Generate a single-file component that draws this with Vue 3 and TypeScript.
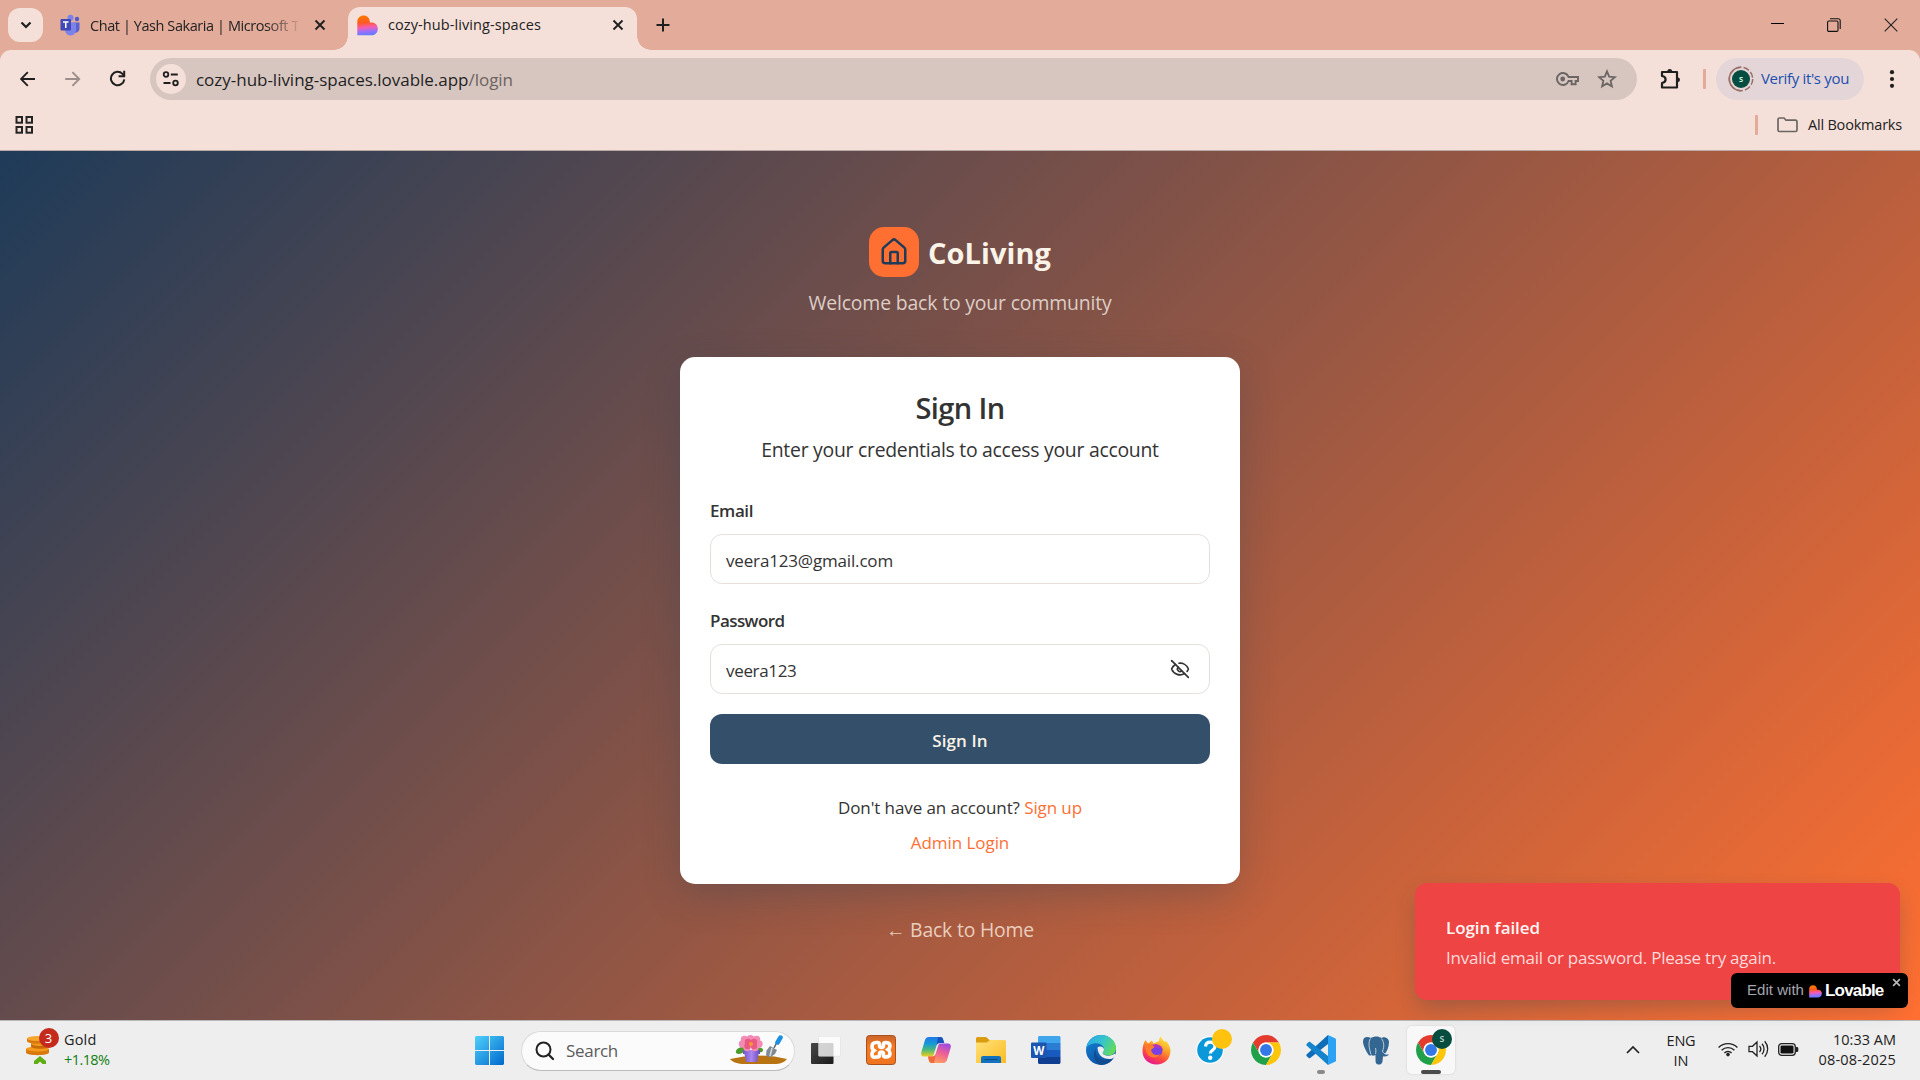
<script setup lang="ts">
import { ref, type Directive } from 'vue'

const email = ref('veera123@gmail.com')
const password = ref('veera123')

// Spreads a single line of text over the given width in pixels.
const vFit: Directive<HTMLElement, number> = {
  mounted(el, binding) {
    const chars = (el.textContent ?? '').trim().length
    const natural = el.getBoundingClientRect().width
    if (chars > 0) el.style.letterSpacing = `${((binding.value - natural) / chars).toFixed(3)}px`
  },
}
</script>

<template>
  <div class="screen">
    <svg class="defs" width="0" height="0">
      <defs>
        <linearGradient id="heartBase" x1="0.4" y1="0" x2="0.5" y2="1">
          <stop offset="0" stop-color="#ff7a00" />
          <stop offset="0.35" stop-color="#ff5a20" />
          <stop offset="0.6" stop-color="#f65bb0" />
          <stop offset="0.8" stop-color="#9a70fa" />
          <stop offset="1" stop-color="#5f7dff" />
        </linearGradient>
        <linearGradient id="winA" x1="0" y1="0" x2="1" y2="1">
          <stop offset="0" stop-color="#4fd0fb" />
          <stop offset="1" stop-color="#0069cc" />
        </linearGradient>
        <linearGradient id="folderG" x1="0" y1="0" x2="1" y2="1">
          <stop offset="0" stop-color="#ffe27a" />
          <stop offset="1" stop-color="#fbbb23" />
        </linearGradient>
        <linearGradient id="copA" x1="0.3" y1="0" x2="0.3" y2="1">
          <stop offset="0" stop-color="#1e78e8" />
          <stop offset="0.35" stop-color="#1699d6" />
          <stop offset="0.65" stop-color="#4cb87c" />
          <stop offset="1" stop-color="#f0cf1c" />
        </linearGradient>
        <linearGradient id="copB" x1="0.7" y1="0" x2="0.3" y2="1">
          <stop offset="0" stop-color="#a04be0" />
          <stop offset="0.45" stop-color="#ee5f96" />
          <stop offset="1" stop-color="#ffa45c" />
        </linearGradient>
        <linearGradient id="edgeA" x1="0" y1="0.2" x2="1" y2="0.6">
          <stop offset="0" stop-color="#2ba8e6" />
          <stop offset="0.5" stop-color="#36c3cf" />
          <stop offset="1" stop-color="#63dc56" />
        </linearGradient>
        <linearGradient id="edgeB" x1="0" y1="0" x2="0.7" y2="1">
          <stop offset="0" stop-color="#1586d8" />
          <stop offset="1" stop-color="#0c4b9c" />
        </linearGradient>
        <linearGradient id="foxA" x1="0.8" y1="0" x2="0.3" y2="1">
          <stop offset="0" stop-color="#fff04a" />
          <stop offset="0.4" stop-color="#ffa125" />
          <stop offset="0.7" stop-color="#ff4a3c" />
          <stop offset="1" stop-color="#e3129b" />
        </linearGradient>
        <linearGradient id="xamppG" x1="0" y1="0" x2="0" y2="1">
          <stop offset="0" stop-color="#c9642a" />
          <stop offset="0.4" stop-color="#f57a22" />
          <stop offset="1" stop-color="#f07420" />
        </linearGradient>
        <linearGradient id="potG" x1="0" y1="0" x2="1" y2="0">
          <stop offset="0" stop-color="#6f55c8" />
          <stop offset="0.5" stop-color="#ab86ee" />
          <stop offset="1" stop-color="#6549bd" />
        </linearGradient>
        <linearGradient id="darkSq" x1="0" y1="0" x2="1" y2="1">
          <stop offset="0" stop-color="#484848" />
          <stop offset="1" stop-color="#1b1b1b" />
        </linearGradient>
        <symbol id="heart" viewBox="0 0 21 21">
          <path d="M0.3 6.5C0.3 3 3 0.4 6.6 0.4c3.500 0 6.200 2.700 6.200 6.200v1h1.700c3.600 0 6.300 2.700 6.300 6.300s-2.700 6.400-6.300 6.400H0.300z" fill="url(#heartBase)" />
        </symbol>
        <symbol id="chrome" viewBox="2 2 44 44">
          <path d="M24 13h19.05A22 22 0 0 0 4.950 13l9.520 16.500A11 11 0 0 1 24 13z" fill="#e33b2e" />
          <path d="M33.530 29.500 24 46A22 22 0 0 1 4.950 13l9.520 16.500a11 11 0 0 0 19.060 0z" fill="#21a04a" />
          <path d="M24 13h19.050A22 22 0 0 1 24 46l9.530-16.500A11 11 0 0 0 24 13z" fill="#fdc60a" />
          <circle cx="24" cy="24" r="11" fill="#fff" />
          <circle cx="24" cy="24" r="8.700" fill="#3478e8" />
        </symbol>
        <symbol id="cross" viewBox="0 0 12 12">
          <path d="M1.500 1.500l9 9M10.500 1.500l-9 9" stroke="#1f1f1f" stroke-width="1.900" fill="none" />
        </symbol>
      </defs>
    </svg>

    <header class="tabstrip">
      <button class="tab-search">
        <svg width="12" height="8" viewBox="0 0 12 8"><path d="M1.500 1.500 6 6l4.500-4.500" fill="none" stroke="#1f1f1f" stroke-width="2.200" /></svg>
      </button>
      <div class="tab">
        <svg width="20" height="22" viewBox="0 0 20 22">
          <circle cx="17" cy="5" r="2.200" fill="#5059c9" />
          <path d="M13 8.500h6.500v6a4 4 0 0 1-5 4z" fill="#5a62d0" />
          <circle cx="10.500" cy="3.700" r="3" fill="#7b83eb" />
          <path d="M5 8.500h11v7.500a5.500 5.500 0 0 1-11 0z" fill="#7b83eb" />
          <rect x="0.500" y="5" width="10.500" height="11.500" rx="1" fill="#4049b5" />
          <path d="M3 8h5.500M5.750 8v6" stroke="#fff" stroke-width="1.500" />
        </svg>
        <div class="tab-title fading"><span v-fit="209" class="t">Chat | Yash Sakaria | Microsoft T</span></div>
        <svg class="tab-x" width="12" height="12"><use href="#cross" /></svg>
      </div>
      <div class="tab active">
        <svg width="21" height="21"><use href="#heart" /></svg>
        <div class="tab-title"><span v-fit="153" class="t">cozy-hub-living-spaces</span></div>
        <svg class="tab-x end" width="12" height="12"><use href="#cross" /></svg>
      </div>
      <svg class="plus" width="14" height="14" viewBox="0 0 14 14"><path d="M7 .5v13M.5 7h13" stroke="#1f1f1f" stroke-width="2" /></svg>
      <div class="controls">
        <svg width="13" height="13" viewBox="0 0 13 13"><path d="M0 5.500h13" stroke="#000" /></svg>
        <svg width="14" height="14" viewBox="0 0 14 14" fill="none" stroke="#111" stroke-width="1.100"><rect x="0.600" y="3" width="10.400" height="10.400" rx="1.200" /><path d="M3 .8h8.200a2 2 0 0 1 2 2V11" /></svg>
        <svg width="14" height="14" viewBox="0 0 14 14"><path d="M.7.700l12.600 12.600M13.300.7.700 13.300" stroke="#222" stroke-width="1.100" /></svg>
      </div>
    </header>

    <div class="chrome-body">
      <div class="toolbar">
        <svg class="nav" width="16" height="16" viewBox="0 0 16 16" fill="none" stroke="#1f1f1f" stroke-width="1.900"><path d="M15 8H1.500M7.800 1.200 1 8l6.800 6.800" /></svg>
        <svg class="nav fwd" width="16" height="16" viewBox="0 0 16 16" fill="none" stroke="#9c8f8b" stroke-width="1.900"><path d="M.2 8H13.700M7.400 1.200 14.200 8l-6.800 6.800" /></svg>
        <svg class="nav rel" width="17" height="17" viewBox="0 0 17 17" fill="none" stroke="#1f1f1f" stroke-width="2"><path d="M15.300 9.300A6.700 6.700 0 1 1 13.500 3.900l1.500 1.600" /><path d="M15.200.8v5.500H9.600" /></svg>
        <div class="urlbar">
          <span class="site">
            <svg width="18" height="18" viewBox="0 0 18 18" fill="none" stroke="#1f1f1f" stroke-width="1.800"><circle cx="4" cy="4.500" r="2.300" /><path d="M8.800 4.500h7M1.500 13h7" /><circle cx="13.500" cy="13" r="2.300" /></svg>
          </span>
          <span v-fit="317" class="t url">cozy-hub-living-spaces.lovable.app<i>/login</i></span>
          <svg class="key" width="23" height="14" viewBox="0 0 23 14" fill="none" stroke="#6b6563" stroke-width="1.900"><path d="M12.600 5A6 6 0 1 0 12.600 9h3v3.200h4V9h2.400V5z" /><circle cx="6.700" cy="7" r="2.400" fill="#6b6563" stroke="none" /></svg>
          <svg class="star" width="20" height="20" viewBox="0 0 20 20" fill="none" stroke="#6b6563" stroke-width="1.800"><path d="m10 2.300 2.200 5.300 5.700.5-4.300 3.700 1.300 5.600-4.900-3-4.900 3 1.300-5.600L2.100 8.100l5.700-.5z" /></svg>
        </div>
        <svg class="puzzle" width="22" height="22" viewBox="0 0 22 22"><path d="M2 4h5.500M12 4h5v15.500H2V15c4.800-.8 4.800-6.200 0-7V4h15" fill="none" stroke="#1f1f1f" stroke-width="2.200" stroke-linejoin="round" /><path d="M7.200 3.500a2.500 2.500 0 0 1 5 0zM17.500 9.200a2.500 2.500 0 0 1 0 5z" fill="#1f1f1f" /></svg>
        <span class="bar-sep"></span>
        <div class="verify">
          <svg width="26" height="26" viewBox="0 0 26 26"><circle cx="13" cy="13" r="11.700" fill="none" stroke="#9a6f66" stroke-width="1.500" stroke-dasharray="6 2.200" /><path d="M13 24.700A11.700 11.700 0 0 1 13 1.300" fill="none" stroke="#9a6f66" stroke-width="1.500" /><circle cx="13" cy="13" r="9" fill="#054d40" /><text x="13" y="16" text-anchor="middle" font-family="Open Sans, sans-serif" font-size="8.500" font-weight="600" fill="#dfe">s</text></svg>
          <span v-fit="88" class="t">Verify it's you</span>
        </div>
        <svg class="dots" width="6" height="20" viewBox="0 0 6 20" fill="#1f1f1f"><circle cx="3" cy="3.200" r="2.100" /><circle cx="3" cy="10" r="2.100" /><circle cx="3" cy="16.800" r="2.100" /></svg>
      </div>
      <div class="bookmarks">
        <svg width="19" height="18" viewBox="0 0 19 18" fill="none" stroke="#242424" stroke-width="2"><rect x="1.500" y="1" width="5.500" height="5.700" /><rect x="11.500" y="1" width="5.500" height="5.700" /><rect x="1.500" y="11" width="5.500" height="5.700" /><rect x="11.500" y="11" width="5.500" height="5.700" /></svg>
        <span class="bar-sep"></span>
        <svg class="folder" width="21" height="16" viewBox="0 0 21 16" fill="none" stroke="#6b6563" stroke-width="1.700"><path d="M1 13V2.500A1.500 1.500 0 0 1 2.500 1H7l2 2.200h9.500A1.500 1.500 0 0 1 20 4.700V13a1.500 1.500 0 0 1-1.500 1.500h-16A1.500 1.500 0 0 1 1 13z" /></svg>
        <span v-fit="94" class="t">All Bookmarks</span>
      </div>
    </div>

    <main class="page">
      <div class="brand">
        <div class="brand-icon">
          <svg width="30" height="30" viewBox="0 0 24 24" fill="none" stroke="#1f3b57" stroke-width="2" stroke-linecap="round" stroke-linejoin="round"><path d="M15 21v-8a1 1 0 0 0-1-1h-4a1 1 0 0 0-1 1v8" /><path d="M3 10a2 2 0 0 1 .709-1.528l7-5.999a2 2 0 0 1 2.582 0l7 5.999A2 2 0 0 1 21 10v9a2 2 0 0 1-2 2H5a2 2 0 0 1-2-2z" /></svg>
        </div>
        <h1 v-fit="123" class="t">CoLiving</h1>
      </div>
      <p v-fit="303" class="t welcome">Welcome back to your community</p>

      <section class="card">
        <h2 v-fit="89" class="t">Sign In</h2>
        <p v-fit="397.500" class="t desc">Enter your credentials to access your account</p>
        <form @submit.prevent>
          <label><span v-fit="43" class="t">Email</span></label>
          <div class="field"><span v-fit="167" class="t">{{ email }}</span></div>
          <label><span v-fit="74.500" class="t">Password</span></label>
          <div class="field">
            <span v-fit="70.500" class="t">{{ password }}</span>
            <svg width="20" height="20" viewBox="0 0 24 24" fill="none" stroke="#333" stroke-width="2" stroke-linecap="round" stroke-linejoin="round"><path d="M10.733 5.076a10.744 10.744 0 0 1 11.205 6.575 1 1 0 0 1 0 .696 10.747 10.747 0 0 1-1.444 2.490" /><path d="M14.084 14.158a3 3 0 0 1-4.242-4.242" /><path d="M17.479 17.499a10.750 10.750 0 0 1-15.417-5.151 1 1 0 0 1 0-.696 10.750 10.750 0 0 1 4.446-5.143" /><path d="m2 2 20 20" /></svg>
          </div>
          <button type="submit" class="submit"><span v-fit="55.500" class="t">Sign In</span></button>
        </form>
        <p v-fit="244" class="t alt">Don't have an account? <a>Sign up</a></p>
        <p v-fit="98.500" class="t alt admin"><a>Admin Login</a></p>
      </section>

      <a v-fit="148" class="t back">← Back to Home</a>

      <aside class="toast">
        <strong v-fit="94" class="t">Login failed</strong>
        <span v-fit="330" class="t">Invalid email or password. Please try again.</span>
      </aside>
      <div class="lovable">
        <span v-fit="57" class="t">Edit with</span>
        <svg width="13" height="13"><use href="#heart" /></svg>
        <b v-fit="58.500" class="t">Lovable</b>
        <svg class="dismiss" width="9" height="9" viewBox="0 0 12 12"><path d="M1.500 1.500l9 9M10.500 1.500l-9 9" stroke="#b8b8bd" stroke-width="2.200" /></svg>
      </div>
    </main>

    <footer class="taskbar">
      <div class="widget">
        <svg width="36" height="34" viewBox="0 0 36 34">
          <path d="M1 21v3.500c0 3.500 23 3.500 23 0V21z" fill="#d9780c" /><ellipse cx="12.500" cy="21" rx="11.500" ry="2.600" fill="#f59a1c" />
          <path d="M6 15.500v3c0 3 18 3 18 0v-3z" fill="#c96a0a" /><ellipse cx="15" cy="15.500" rx="9" ry="2.500" fill="#f09a1c" />
          <path d="M2 10.500v2.500c0 3.500 20 3.500 20 0v-2.500z" fill="#d9780c" /><ellipse cx="12" cy="10.500" rx="10" ry="2.500" fill="#f7a52c" />
        </svg>
        <svg class="rise" width="12" height="8" viewBox="0 0 12 8"><path d="M0 8V5l6-5 6 5v3H8.500L6 5.500 3.500 8z" fill="#5fae14" /></svg>
        <span class="count">3</span>
        <div class="widget-text">
          <span v-fit="32.500" class="t">Gold</span>
          <span v-fit="45.500" class="t up">+1.18%</span>
        </div>
      </div>

      <div class="apps">
        <span class="slot start"><svg width="29" height="29" viewBox="0 0 29 29"><path d="M1 0h13v14H0V1zM15 0h13l1 1v13H15zM0 15h14v14H1l-1-1zM15 15h14v13l-1 1H15z" fill="url(#winA)" /></svg></span>
        <div class="search">
          <svg width="20" height="20" viewBox="0 0 20 20" fill="none" stroke="#222"><circle cx="8.500" cy="8.500" r="7" stroke-width="2" /><path d="m13.500 13.500 4.500 4.500" stroke-width="2.300" stroke-linecap="round" /></svg>
          <span v-fit="52" class="t">Search</span>
          <svg class="art" width="58" height="31" viewBox="0 0 58 31">
            <path d="M0 24q28-7 57 0c-3 4-8 5-12 5H15C8 29 2 27 0 24z" fill="#b87412" />
            <ellipse cx="10.500" cy="15.500" rx="5" ry="3" fill="#4c9c2a" transform="rotate(-25 10.500 15.500)" /><ellipse cx="29" cy="15" rx="4" ry="2.500" fill="#4c9c2a" />
            <path d="M13 15h17v4h-1.500L27 27H16l-1.500-8H13z" fill="url(#potG)" />
            <g fill="#f28ab6"><circle cx="14.500" cy="4.500" r="3.700" /><circle cx="20.500" cy="3.700" r="3.700" /><circle cx="26.500" cy="4.500" r="3.700" /><circle cx="12.500" cy="9" r="3.700" /><circle cx="29" cy="9" r="3.700" /><circle cx="17" cy="12.500" r="3.700" /><circle cx="25" cy="12.500" r="3.700" /></g>
            <g fill="#ea5a80"><circle cx="18" cy="7" r="3.200" /><circle cx="24" cy="7" r="3.200" /><circle cx="17.500" cy="11" r="3.200" /><circle cx="24" cy="11" r="3.200" /></g><circle cx="21" cy="9" r="2" fill="#f7962d" />
            <path d="m44 13 4-8" stroke="#5c6570" stroke-width="1.500" /><path d="m47.500 7.500 3-5" stroke="#1b8fe0" stroke-width="4.500" stroke-linecap="round" />
            <path d="m40 11 7 4-2 4-5 3.500-4-2 .5-5z" fill="#7f8a94" /><path d="m42 13-2 8" stroke="#d4dade" stroke-width="1.500" />
          </svg>
        </div>
        <span class="slot first"><svg width="30" height="29" viewBox="0 0 30 29"><rect y="7" width="22.500" height="21" rx="1" fill="url(#darkSq)" /><rect x="7.500" y="0.300" width="22" height="20" rx="1" fill="#fff" fill-opacity="0.780" stroke="#d8d8d8" stroke-width="0.500" /></svg></span>
        <span class="slot"><svg width="30" height="30" viewBox="0 0 30 30"><rect x="0.500" y="0.500" width="29" height="29" rx="3" fill="url(#xamppG)" stroke="#a9501c" /><g fill="none" stroke="#fff" stroke-width="3.600"><path d="M10 7.500h1.500q2 0 2 2v1q0 2 2 2t2-2v-1q0-2 2-2 4.500 0 4.500 3.500 0 2.200-2 3.500 2 1.300 2 4 0 3.500-4.500 3.500-2 0-2-2v-1q0-2-2-2t-2 2v1q0 2-2 2H9.500Q6 23 6 19.500q0-2.700 2-4-2-1.300-2-4 0-4 4-4z" /></g></svg></span>
        <span class="slot"><svg width="30" height="28" viewBox="0 0 30 28"><path d="M8 1h11c2 0 2.700 1 3.200 3l.8 3h-4c-2 0-3 1-3.600 3l-2.500 8c-.6 2-1.400 2.500-3 2.500H3C.5 20.500-.3 18.500.4 16L4 4c.6-2 2-3 4-3z" fill="url(#copA)" /><path d="M17 1c3 0 4.500 0 5.200 2.500L23.300 7H19c-1.800 0-3 .8-3.500 2.500z" fill="#1b53bd" /><path d="M22 27H11c-2 0-2.700-1-3.200-3L7 20.500h4c2 0 3-.7 3.600-2.700l2.500-7.800c.6-2 1.400-2.500 3-2.500H27c2.500 0 3.300 2 2.600 4.500L26 24c-.6 2-2 3-4 3z" fill="url(#copB)" /><path d="M7 20.500h4.500c2 0 3-1 3.500-2.700L13 27h-2c-2 0-2.700-1-3.200-3z" fill="#ef6a3c" /></svg></span>
        <span class="slot"><svg width="30" height="26" viewBox="0 0 30 26"><path d="M0 1.500A1.500 1.500 0 0 1 1.500 0H10l3.500 3H28v6H0z" fill="#dc9c10" /><path d="M0 5.500h11l3-2.500h14.500A1.500 1.500 0 0 1 30 4.500V26H0z" fill="url(#folderG)" /><path d="M5 26v-5a2 2 0 0 1 2-2h16a2 2 0 0 1 2 2v5z" fill="#1272bd" /><path d="M8.500 22.500h13" stroke="#0b4f91" stroke-width="1.200" /></svg></span>
        <span class="slot"><svg width="30" height="28" viewBox="0 0 30 28"><path d="M8 0h20.500l1 1v6H7V1z" fill="#41a5ee" /><path d="M7 7h22.500v7H7z" fill="#2b7cd3" /><path d="M7 14h22.500v7H7z" fill="#185abd" /><path d="M7 21h22.500v6l-1 1H8l-1-1z" fill="#103f91" /><rect y="6.500" width="15.500" height="15.500" rx="1" fill="#1b55b0" /><text x="7.800" y="18.500" text-anchor="middle" font-family="Open Sans, sans-serif" font-weight="700" font-size="11.500" fill="#fff">W</text></svg></span>
        <span class="slot"><svg width="30" height="30" viewBox="0 0 30 30"><circle cx="15" cy="15" r="15" fill="url(#edgeB)" /><path d="M.3 13C1.500 5.500 7.500 0 15 0c8.500 0 15 6 15 13.200 0 4.300-3 7.300-7.300 7.300-3.700 0-6-1.500-6-2.700 0-.8 1.300-1.300 1.300-3.500 0-3-3.200-6-8-6C5.500 8.300 1.500 10.500.3 13z" fill="url(#edgeA)" /><path d="M11.500 12.500c1.500-1.700 6.300-1.200 6.500 2 0 2-1.300 2.500-1.300 3.500 0 1.200 2.500 2.700 6 2.700 2.500 0 4.500-.8 5.800-2.200l1.500 1.500c-1 1.300-2 2.500-3.300 3.700-9 1.500-15-3-15.200-11.200z" fill="#eee" /><path d="M10 14c-2 9 7 14 17.500 9-3 4.500-7 6.800-12.500 7-5.500-1.500-9.500-10-5-16z" fill="#104c8f" /></svg></span>
        <span class="slot"><svg width="29" height="29" viewBox="0 0 29 29"><path d="M3.500 4l2.500 3.500 4-3 1.500 3L17 5c0-2 1-4 2-4.700 0 2 2 3.500 3.500 5.500L24 5c2.500 2.500 4.500 6 4.500 9.500C28.500 23 22.500 28.500 14.500 28.500S.5 23 .5 15C.5 10.500 1.500 7 3.500 4z" fill="url(#foxA)" /><circle cx="14.500" cy="14.500" r="6" fill="#7a3fe0" /><path d="M3 9c4-2 8-1 11 2-3 0-3 2-5 3 1 5 6 6 9 4-2 5-12 5-14-3z" fill="#ff7a2b" /><path d="M10 9c5-2 10 1 11 5-2-2-4-3-7-2z" fill="#b432c0" /></svg></span>
        <span class="slot badge-slot"><svg width="30" height="30" viewBox="0 0 30 30"><circle cx="14" cy="15" r="14" fill="#fff" /><circle cx="14" cy="15" r="12.800" fill="#0a98d8" /><path d="M9.500 11.500c.3-3 2.200-4.300 4.700-4.300 3 0 4.800 1.700 4.800 4.200 0 4-4.700 3.700-4.700 7" fill="none" stroke="#fff" stroke-width="3.200" /><circle cx="14.200" cy="22.800" r="2.200" fill="#fff" /></svg><i class="dot yellow"></i></span>
        <span class="slot"><svg width="30" height="30"><use href="#chrome" /></svg></span>
        <span class="slot running"><svg width="30" height="30" viewBox="0 0 30 30"><path d="M22 0 .8 19.300c-.6.600-.6 1.500 0 2l1.700 1.500c.5.500 1.200.5 1.700.1L22 9z" fill="#0f6cb6" /><path d="M22 30 .8 10.700c-.6-.6-.6-1.500 0-2l1.700-1.500c.5-.5 1.200-.5 1.700-.1L22 21z" fill="#1584cd" /><path d="M22 0l7 3.200c.6.300 1 .8 1 1.500v20.600c0 .7-.4 1.200-1 1.500L22 30z" fill="#2ba2f3" /></svg></span>
        <span class="slot"><svg width="28" height="29" viewBox="0 0 28 29"><path d="M9 2c3-2 8-2 10 0 3-2 8 0 8 4 0 5-2 9-4 12 1 1 3 .5 4 .2-1 2-4 2.500-6 2l-.5 5c-.3 2.500-2 3.500-4 3.300-2 0-3-1.500-3-4V19c-2 1-3 1-4 0-1 1-2.500.8-3.500-1C3.500 14 1 9 1 5.500 1 1 5 0 9 2z" fill="#336791" /><path d="M8.500 2.500C6 6 7 12 9 18.500M19.500 2.500c2.500 3.500 3 8 1 12.500M13.500 18c.5-2 .5-4 0-6M20.500 15c.5 2 2 3 4 3" fill="none" stroke="#dfe6ed" stroke-width="0.800" /></svg></span>
        <span class="slot current badge-slot"><svg width="30" height="30"><use href="#chrome" /></svg><i class="dot green">s</i></span>
      </div>

      <div class="tray">
        <svg class="chev" width="14" height="9" viewBox="0 0 14 9"><path d="M1 8l6-6 6 6" fill="none" stroke="#222" stroke-width="1.700" /></svg>
        <div class="lang"><span v-fit="29" class="t">ENG</span><span v-fit="15" class="t">IN</span></div>
        <svg class="wifi" width="20" height="16" viewBox="0 0 20 16" fill="none" stroke="#222" stroke-width="1.400"><path d="M.6 6.500a13.300 13.300 0 0 1 18.800 0M3.600 9.300a9.100 9.100 0 0 1 12.800 0M6.400 12a5.100 5.100 0 0 1 7.200 0" /><circle cx="10" cy="13.600" r="1.800" fill="#222" stroke="none" /></svg>
        <svg class="vol" width="21" height="18" viewBox="0 0 21 18" fill="none" stroke="#222" stroke-width="1.300"><path d="M1 6.300h3.500L9 2v14l-4.500-4.300H1zM11.500 6a4.500 4.500 0 0 1 0 6M14 3.700a8 8 0 0 1 0 10.600M16.700 1.300a11.500 11.500 0 0 1 0 15.400" /></svg>
        <svg class="bat" width="21" height="13" viewBox="0 0 21 13"><rect x="0.700" y="0.700" width="16.600" height="11.600" rx="3" fill="none" stroke="#222" stroke-width="1.300" /><rect x="2.500" y="2.500" width="13" height="8" rx="1.300" fill="#111" /><path d="M18 4h1.500l.8 1v3l-.8 1H18z" fill="#222" /></svg>
        <div class="clock"><span v-fit="63" class="t">10:33 AM</span><span v-fit="77.500" class="t">08-08-2025</span></div>
      </div>
    </footer>
  </div>
</template>

<style>
body {
  margin: 0;
  overflow: hidden;
}
</style>

<style scoped>
* {
  box-sizing: border-box;
}
.screen {
  width: 1920px;
  height: 1080px;
  display: flex;
  flex-direction: column;
  font-family: 'Open Sans', 'Noto Sans', sans-serif;
  color: #222;
  overflow: hidden;
}
.defs {
  position: absolute;
}
svg {
  display: block;
  flex: none;
}
button {
  border: 0;
  font: inherit;
  padding: 0;
}
h1,
h2,
p {
  margin: 0;
}
.t {
  display: inline-block;
  white-space: nowrap;
  flex: none;
}

/* Tab strip */
.tabstrip {
  height: 50px;
  flex: none;
  background: #e3ab99;
  display: flex;
  padding-left: 8px;
}
.tab-search {
  width: 35px;
  height: 34px;
  margin-top: 8px;
  border-radius: 12px;
  background: #f5e0d9;
  display: flex;
  align-items: center;
  justify-content: center;
}
.tab {
  display: flex;
  align-items: center;
  padding-left: 17px;
  font-size: 14.500px;
  line-height: 20px;
}
.tab-title {
  margin: 1px 0 0 10px;
}
.tab-title .t {
  display: block;
  width: max-content;
}
.tab-title.fading {
  width: 208px;
  overflow: hidden;
  -webkit-mask-image: linear-gradient(90deg, #000 175px, transparent 212px);
  mask-image: linear-gradient(90deg, #000 175px, transparent 212px);
}
.tab-x {
  margin-left: 16px;
}
.tab-x.end {
  margin-left: auto;
}
.tab.active {
  position: relative;
  width: 289px;
  height: 43px;
  margin: 7px 0 0 22px;
  padding: 0 13px 7px 9px;
  background: #f5e0d9;
  border-radius: 12px 12px 0 0;
}
.tab.active::before,
.tab.active::after {
  content: '';
  position: absolute;
  bottom: 0;
  width: 14px;
  height: 14px;
}
.tab.active::before {
  left: -14px;
  background: radial-gradient(circle at 0 0, transparent 13.500px, #f5e0d9 14px);
}
.tab.active::after {
  right: -14px;
  background: radial-gradient(circle at 100% 0, transparent 13.500px, #f5e0d9 14px);
}
.tab.active .tab-title {
  margin-top: 0;
}
.plus {
  margin: 18px 0 0 19px;
}
.controls {
  margin-left: auto;
  padding: 18px 22px 0 0;
  display: flex;
  gap: 43px;
}

/* Toolbar and bookmarks */
.chrome-body {
  height: 101px;
  flex: none;
  background: linear-gradient(#f5e0d9, #f5e0d9) 0 12px / 100% 100% no-repeat, #e3ab99;
  border-bottom: 1px solid #b9aaa5;
}
.toolbar {
  height: 50px;
  display: flex;
  align-items: center;
  padding: 7px 25px 0 20px;
  background: #f5e0d9;
  border-radius: 11px 11px 0 0;
}
.nav.fwd {
  margin-left: 29px;
}
.nav.rel {
  margin: 0 24px 0 28px;
}
.urlbar {
  width: 1487px;
  height: 42px;
  flex: none;
  margin-top: 1px;
  border-radius: 21px;
  background: #d7c6bf;
  display: flex;
  align-items: center;
  padding: 0 20px 0 6px;
}
.site {
  width: 30px;
  height: 30px;
  border-radius: 50%;
  background: #f5e0d9;
  display: flex;
  align-items: center;
  justify-content: center;
}
.url {
  margin-left: 10px;
  font-size: 17px;
  color: #1f1f1f;
}
.url i {
  font-style: normal;
  color: #6b6361;
}
.key {
  margin-left: auto;
}
.star {
  margin: -1px 0 0 18px;
}
.puzzle {
  margin-left: 23px;
}
.bar-sep {
  width: 3px;
  height: 20px;
  border-radius: 1px;
  background: #e3a999;
  flex: none;
}
.toolbar .bar-sep {
  margin: 0 10px 0 21px;
}
.verify {
  width: 148px;
  height: 42px;
  border-radius: 21px;
  background: #e4d6d8;
  display: flex;
  align-items: center;
  padding-left: 12px;
  gap: 7px;
  font-size: 15px;
  color: #1c4fae;
  flex: none;
}
.verify .t {
  margin-top: -2px;
}
.dots {
  margin-left: 25px;
}
.bookmarks {
  height: 50px;
  display: flex;
  align-items: center;
  padding: 0 18px 0 15px;
  font-size: 14.500px;
}
.bookmarks .bar-sep {
  margin-left: auto;
}
.bookmarks .t {
  margin-top: -2px;
}
.folder {
  margin: 0 10px 0 19px;
}

/* Page */
.page {
  position: relative;
  height: 869px;
  flex: none;
  background: linear-gradient(135deg, #1e3b59 0%, #ff6f31 100%);
  display: flex;
  flex-direction: column;
  align-items: center;
  padding-top: 76px;
}
.brand {
  height: 50px;
  display: flex;
  align-items: center;
  gap: 9px;
}
.brand-icon {
  width: 50px;
  height: 50px;
  border-radius: 15px;
  background: #ff6f31;
  display: flex;
  align-items: center;
  justify-content: center;
}
.brand h1 {
  margin-top: 2px;
  font-size: 29px;
  font-weight: 700;
  line-height: 50px;
  color: #faf3e8;
}
.welcome {
  margin-top: 12px;
  font-size: 19.400px;
  line-height: 28px;
  color: #ddcdc5;
}
.card {
  width: 560px;
  height: 527px;
  flex: none;
  margin-top: 40px;
  padding: 30px;
  border-radius: 15px;
  background: #fff;
  box-shadow: 0 12px 40px -4px rgba(31, 58, 87, 0.300);
  display: flex;
  flex-direction: column;
  align-items: center;
  color: #333;
}
.card h2 {
  font-size: 29px;
  font-weight: 600;
  line-height: 42px;
}
.desc {
  margin-top: 1px;
  font-size: 19.400px;
  line-height: 40px;
}
form {
  width: 100%;
  margin-top: 28px;
  display: flex;
  flex-direction: column;
  font-size: 17px;
}
label {
  height: 24px;
  line-height: 26px;
  font-weight: 600;
}
.field {
  height: 50px;
  margin: 12px 0 24px;
  padding: 2px 19px 0 15px;
  border: 1px solid #e6dfda;
  border-radius: 12px;
  display: flex;
  align-items: center;
  justify-content: space-between;
}
.field svg {
  margin-top: -2px;
}
.submit {
  height: 50px;
  margin-top: -4px;
  padding-top: 2px;
  border-radius: 12px;
  background: #334f69;
  color: #faf3e8;
  font-weight: 600;
}
.alt {
  margin-top: 31px;
  font-size: 17px;
  line-height: 26px;
}
.alt.admin {
  margin-top: 9px;
}
.alt a {
  color: #ff6f35;
}
.back {
  margin-top: 32px;
  font-size: 19.400px;
  line-height: 28px;
  color: #eacdbd;
}
.toast {
  position: absolute;
  left: 1415px;
  top: 732px;
  width: 485px;
  height: 117px;
  padding: 30px 31px;
  border-radius: 12px;
  background: #ef4444;
  box-shadow: 0 10px 22px -3px rgba(31, 58, 87, 0.300);
  display: flex;
  flex-direction: column;
  align-items: flex-start;
  font-size: 17px;
  line-height: 30px;
  color: #fddada;
}
.toast strong {
  margin-bottom: 1px;
  font-weight: 600;
  line-height: 29px;
  color: #fff6f3;
}
.lovable {
  position: absolute;
  left: 1731px;
  top: 822px;
  width: 177px;
  height: 35px;
  border-radius: 6px;
  background: #000;
  display: flex;
  align-items: center;
  padding-left: 16px;
  font-family: 'Liberation Sans', Arial, sans-serif;
  font-size: 15px;
  line-height: 18px;
  color: #a5a5ad;
}
.lovable span {
  margin-top: -2px;
}
.lovable > svg {
  margin: 1px 3px 0 5px;
}
.lovable b {
  font-size: 17px;
  color: #fff;
}
.lovable .dismiss {
  margin: -16px 0 0 8px;
}

/* Taskbar */
.taskbar {
  height: 60px;
  flex: none;
  background: #eee;
  border-top: 1px solid #b9b7b7;
  display: flex;
  align-items: flex-start;
  font-size: 14.500px;
  line-height: 20px;
}
.widget {
  position: relative;
  width: 462px;
  height: 59px;
  padding: 7px 0 0 25px;
  display: flex;
}
.rise {
  position: absolute;
  left: 34px;
  top: 35px;
}
.count {
  position: absolute;
  left: 38.500px;
  top: 7px;
  width: 20px;
  height: 20px;
  border-radius: 50%;
  background: #c42b1c;
  color: #fff;
  font-size: 13px;
  text-align: center;
}
.widget-text,
.lang,
.clock {
  display: flex;
  flex-direction: column;
}
.widget-text {
  margin: 2px 0 0 3px;
  align-items: flex-start;
}
.up {
  color: #138013;
}
.apps {
  display: flex;
  height: 59px;
  align-items: center;
}
.slot {
  position: relative;
  width: 48px;
  height: 48px;
  margin-right: 7px;
  margin-top: -1px;
  border-radius: 5px;
  display: flex;
  align-items: center;
  justify-content: center;
  flex: none;
}
.slot.start {
  width: 55px;
  margin-right: 4px;
}
.slot.first {
  margin-left: 7px;
}
.slot.current {
  background: #f8f8f8;
  box-shadow: 0 0 1px 1px #e2e2e2;
}
.slot.running::after,
.slot.current::after {
  content: '';
  position: absolute;
  bottom: 0;
  left: 20px;
  width: 8px;
  height: 4px;
  border-radius: 2px;
  background: #8a8a8a;
}
.slot.current::after {
  left: 14px;
  width: 20px;
  background: #4c4c4c;
}
.dot {
  position: absolute;
  left: 25px;
  top: 3px;
  width: 20px;
  height: 20px;
  border-radius: 50%;
  font-style: normal;
  font-size: 10px;
  font-weight: 600;
  line-height: 19px;
  text-align: center;
}
.yellow {
  background: #ffc20e;
}
.green {
  background: #064d40;
  color: #b9d2cc;
}
.search {
  width: 274px;
  height: 40px;
  border: 1px solid #dadada;
  border-bottom-color: #bdbdbd;
  border-radius: 20px;
  background: #fbfbfb;
  display: flex;
  align-items: center;
  padding: 0 6px 0 13px;
  font-size: 17px;
  color: #5c5c5c;
}
.search .t {
  margin-left: 11px;
}
.art {
  margin-left: auto;
}
.tray {
  margin-left: auto;
  height: 59px;
  display: flex;
  padding-right: 24px;
}
.chev {
  margin-top: 24px;
}
.lang {
  margin: 10px 0 0 27px;
  align-items: center;
}
.wifi {
  margin: 20px 0 0 22px;
}
.vol {
  margin: 19px 0 0 10px;
}
.bat {
  margin: 22px 0 0 9px;
}
.clock {
  margin: 9px 0 0 20px;
  align-items: flex-end;
}
</style>
